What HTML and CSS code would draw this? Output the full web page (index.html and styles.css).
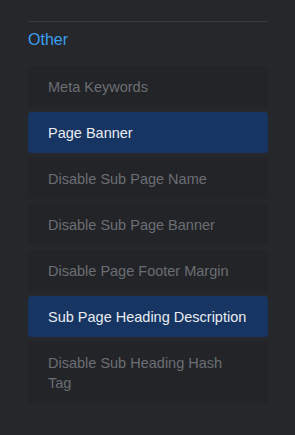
FILE: index.html
```html
<!DOCTYPE html>
<html lang="en">
<head>
  <meta charset="UTF-8">
  <meta name="viewport" content="width=device-width, initial-scale=1.0">
  <title>Other settings</title>
  <link rel="stylesheet" href="styles.css">
</head>
<body>
<div id="panel">
  <div class="divider"></div>
  <div class="heading">Other</div>
  <div id="list">
    <div class="item">Meta Keywords</div>
    <div class="item active">Page Banner</div>
    <div class="item">Disable Sub Page Name</div>
    <div class="item">Disable Sub Page Banner</div>
    <div class="item">Disable Page Footer Margin</div>
    <div class="item active">Sub Page Heading Description</div>
    <div class="item">Disable Sub Heading Hash Tag</div>
  </div>
</div>
</body>
</html>
```

FILE: styles.css
```css
body {
  margin: 0;
  background: #26272b;
  font-family: "Liberation Sans", Arial, sans-serif;
}
#panel {
  padding: 21px 27px 0 28px;
}
.divider {
  height: 1px;
  background: #3a3b40;
}
.heading {
  margin-top: 8px;
  font-size: 16px;
  line-height: 20px;
  color: #3a9ff0;
}
#list {
  margin-top: 16px;
  display: flex;
  flex-direction: column;
  gap: 5px;
}
.item {
  padding: 11px 20px 10px;
  font-size: 14.5px;
  line-height: 20px;
  color: #6b6e73;
  background: #232428;
  border-radius: 4px;
}
.item.active {
  background: #173562;
  color: #e9ecf1;
}
```
